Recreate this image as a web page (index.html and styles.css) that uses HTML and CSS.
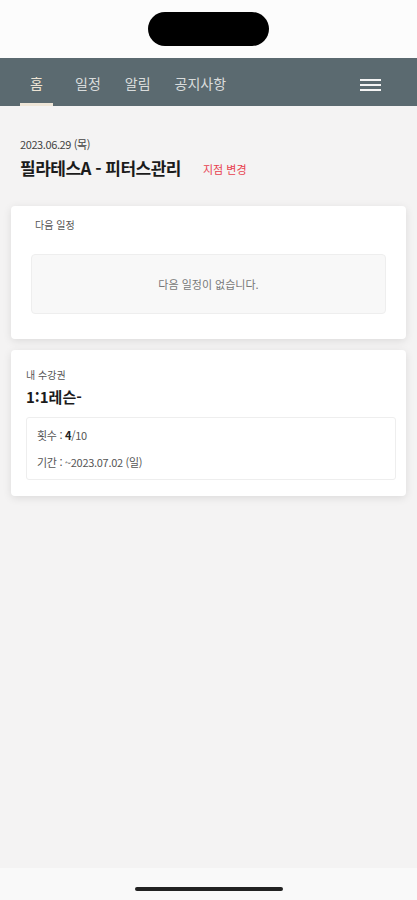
FILE: index.html
```html
<!DOCTYPE html>
<html lang="ko">
<head>
    <meta charset="UTF-8">
    <meta name="viewport" content="width=device-width, initial-scale=1.0">
    <title>홈</title>
    <link rel="stylesheet" href="styles.css">
</head>
<body>
    <!-- Status bar -->
    <div class="status">
        <div class="island"></div>
    </div>

    <!-- Top navigation -->
    <div class="nav">
        <div class="tabs">
            <span class="tab active">홈</span>
            <span class="tab">일정</span>
            <span class="tab">알림</span>
            <span class="tab">공지사항</span>
        </div>
        <div class="menu">
            <span></span><span></span><span></span>
        </div>
    </div>

    <div class="content">
        <div class="branch">
            <div class="date">2023.06.29 (목)</div>
            <div class="branch-row">
                <h1>필라테스A - 피터스관리</h1>
                <span class="change">지점 변경</span>
            </div>
        </div>

        <!-- Next schedule -->
        <div class="card schedule">
            <div class="label">다음 일정</div>
            <div class="empty">다음 일정이 없습니다.</div>
        </div>

        <!-- My pass -->
        <div class="card pass">
            <div class="label">내 수강권</div>
            <h2>1:1레슨-</h2>
            <div class="pass-info">
                <div>횟수 : <b>4</b>/10</div>
                <div>기간 : ~2023.07.02 (일)</div>
            </div>
        </div>
    </div>

    <div class="home-bar">
        <div class="indicator"></div>
    </div>
</body>
</html>
```

FILE: styles.css
```css
/* Base */
body {
    margin: 0;
    padding: 0;
    height: 900px;
    background-color: #f4f3f3;
    font-family: 'Noto Sans CJK KR', 'Noto Sans', sans-serif;
    color: #222;
    display: flex;
    flex-direction: column;
    overflow: hidden;
}

/* Status bar */
.status {
    height: 58px;
    background-color: #fcfcfc;
    display: flex;
    justify-content: center;
    align-items: flex-start;
}

.island {
    width: 121px;
    height: 34px;
    margin-top: 12px;
    background-color: #000;
    border-radius: 17px;
}

/* Navigation */
.nav {
    height: 48px;
    background-color: #5b6a70;
    display: flex;
    justify-content: space-between;
    align-items: stretch;
    padding: 0 36px 0 20px;
}

.tabs {
    display: flex;
    align-items: stretch;
}

.tab {
    color: #d9dcdc;
    font-size: 14px;
    display: flex;
    align-items: center;
    margin-right: 24px;
    padding-top: 2px;
}

.tab.active {
    color: #ece3d3;
    width: 33px;
    justify-content: center;
    margin-right: 22px;
    border-bottom: 3px solid #efe6d8;
    padding-top: 5px;
}

.menu {
    display: flex;
    flex-direction: column;
    justify-content: center;
    gap: 3px;
    padding-top: 5px;
}

.menu span {
    display: block;
    width: 21px;
    height: 2px;
    background-color: #f4f4f4;
}

/* Content */
.content {
    flex: 1;
    padding: 0 11px;
}

.branch {
    padding: 30px 9px 26px;
}

.date {
    font-size: 11px;
    color: #444;
    letter-spacing: -0.4px;
    line-height: 16px;
}

.branch-row {
    display: flex;
    align-items: center;
    margin-top: 3px;
}

h1 {
    margin: 0;
    font-size: 17px;
    font-weight: bold;
    letter-spacing: -0.5px;
    color: #1b1b1b;
}

.change {
    font-size: 11px;
    color: #e8414f;
    margin-left: 22px;
    margin-top: 2px;
}

.card {
    background-color: #fff;
    border-radius: 4px;
    box-shadow: 0 2px 8px rgba(0, 0, 0, 0.1);
    margin-bottom: 11px;
}

.label {
    font-size: 10px;
    color: #555;
}

.schedule {
    padding: 11px 20px 25px 20px;
}

.schedule .label {
    padding-left: 4px;
    line-height: 16px;
}

.empty {
    margin-top: 21px;
    height: 60px;
    background-color: #f8f8f8;
    border: 1px solid #eeeeee;
    border-radius: 4px;
    box-sizing: border-box;
    display: flex;
    align-items: center;
    justify-content: center;
    font-size: 11px;
    color: #777;
}

.pass {
    padding: 17px 10px 16px 15px;
}

.pass .label {
    line-height: 16px;
}

h2 {
    margin: 4px 0 10px;
    font-size: 15px;
    font-weight: bold;
    color: #1b1b1b;
    line-height: 20px;
}

.pass-info {
    border: 1px solid #eeeeee;
    border-radius: 3px;
    padding: 4px 10px 3px;
    font-size: 11px;
    color: #555;
}

.pass-info div {
    line-height: 27px;
    letter-spacing: -0.3px;
}

.pass-info b {
    color: #222;
}

/* Home indicator */
.home-bar {
    height: 32px;
    background-color: #f9f9f9;
    display: flex;
    justify-content: center;
}

.indicator {
    width: 148px;
    height: 4px;
    margin-top: 19px;
    background-color: #222;
    border-radius: 2px;
}
```
